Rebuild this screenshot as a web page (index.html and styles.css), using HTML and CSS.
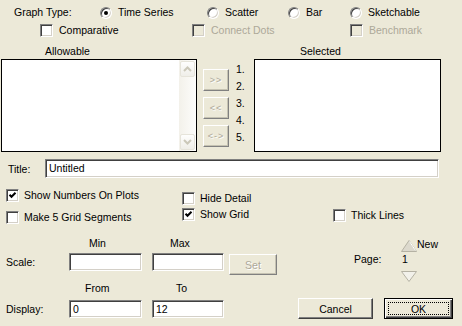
FILE: index.html
```html
<!DOCTYPE html>
<html lang="en">
<head>
  <meta charset="UTF-8" />
  <title>Graph Options</title>
  <link rel="stylesheet" href="styles.css">
</head>
<body>

  <!-- Graph type -->
  <div class="row type-row">
    <span class="type-label">Graph Type:</span>
    <label class="opt w-time"><span class="radio on"></span>Time Series</label>
    <label class="opt w-scatter"><span class="radio"></span>Scatter</label>
    <label class="opt w-bar"><span class="radio"></span>Bar</label>
    <label class="opt"><span class="radio"></span>Sketchable</label>
  </div>

  <div class="row opts-row">
    <label class="opt w-comp"><span class="box"></span>Comparative</label>
    <label class="opt off w-dots"><span class="box"></span>Connect Dots</label>
    <label class="opt off"><span class="box"></span>Benchmark</label>
  </div>

  <!-- Lists -->
  <div class="row list-heads">
    <span class="head-allow">Allowable</span>
    <span>Selected</span>
  </div>

  <div class="lists">
    <div class="listbox allow">
      <div class="list-body"></div>
      <div class="scroll">
        <div class="scroll-btn">
          <svg width="9" height="6" viewBox="0 0 9 6"><path d="M1 5 L4.5 1.5 L8 5" fill="none" stroke="#cbc8b9" stroke-width="2"/></svg>
        </div>
        <div class="scroll-btn">
          <svg width="9" height="6" viewBox="0 0 9 6"><path d="M1 1 L4.5 4.5 L8 1" fill="none" stroke="#cbc8b9" stroke-width="2"/></svg>
        </div>
      </div>
    </div>
    <div class="move-btns">
      <div class="btn off small">&gt;&gt;</div>
      <div class="btn off small">&lt;&lt;</div>
      <div class="btn off small">&lt;-&gt;</div>
    </div>
    <div class="nums">
      <div>1.</div><div>2.</div><div>3.</div><div>4.</div><div>5.</div>
    </div>
    <div class="listbox selected"></div>
  </div>

  <!-- Title -->
  <div class="title-row">
    <span class="title-label">Title:</span>
    <div class="field title-field">Untitled</div>
  </div>

  <!-- Options -->
  <div class="checks">
    <div class="check-col col-a">
      <label class="opt"><span class="box">
        <svg width="11" height="11" viewBox="0 0 11 11"><path d="M2.5 4.8 L4.5 6.8 L8.5 2.8" fill="none" stroke="#000" stroke-width="2"/></svg>
      </span>Show Numbers On Plots</label>
      <label class="opt"><span class="box"></span>Make 5 Grid Segments</label>
    </div>
    <div class="check-col col-b">
      <label class="opt"><span class="box"></span>Hide Detail</label>
      <label class="opt"><span class="box">
        <svg width="11" height="11" viewBox="0 0 11 11"><path d="M2.5 4.8 L4.5 6.8 L8.5 2.8" fill="none" stroke="#000" stroke-width="2"/></svg>
      </span>Show Grid</label>
    </div>
    <div class="check-col col-c">
      <label class="opt"><span class="box"></span>Thick Lines</label>
    </div>
  </div>

  <!-- Scale, display, page -->
  <div class="bottom">
    <div class="bottom-left">
      <div class="heads heads-scale">
        <span class="head-first">Min</span>
        <span>Max</span>
      </div>
      <div class="field-row scale-row">
        <span class="row-label">Scale:</span>
        <div class="field num-a"></div>
        <div class="field num-b"></div>
        <div class="btn off set-btn">Set</div>
      </div>
      <div class="heads heads-display">
        <span class="head-first">From</span>
        <span>To</span>
      </div>
      <div class="field-row">
        <span class="row-label">Display:</span>
        <div class="field num-a">0</div>
        <div class="field num-b">12</div>
      </div>
    </div>

    <div class="bottom-right">
      <div class="pager">
        <span class="page-label">Page:</span>
        <div class="spin">
          <svg class="spin-up" width="17" height="12" viewBox="0 0 17 12"><polygon points="9,0.5 16.5,11.5 1.5,11.5" fill="#dcd9cd" stroke="#b5b2a4"/><path d="M9.5 1.5 L15.5 10.5" stroke="#fff"/></svg>
          <div class="page-num">1</div>
          <svg class="spin-down" width="17" height="11" viewBox="0 0 17 11"><polygon points="1.5,0.5 16.5,0.5 9,10.5" fill="#f2f1ea" stroke="#b5b2a4"/></svg>
        </div>
        <span class="page-new">New</span>
      </div>
      <div class="actions">
        <div class="btn cancel-btn">Cancel</div>
        <div class="btn ok-btn">OK</div>
      </div>
    </div>
  </div>

</body>
</html>
```

FILE: styles.css
```css
* {
  box-sizing: border-box;
}

body {
  margin: 0;
  width: 462px;
  height: 326px;
  overflow: hidden;
  background: #ece9d8;
  font-family: "Liberation Sans", Arial, sans-serif;
  font-size: 10.5px;
  color: #000;
}

.row {
  display: flex;
  align-items: center;
  height: 13px;
  line-height: 13px;
}

.opt {
  display: flex;
  align-items: center;
  gap: 6px;
  white-space: nowrap;
}

.opt.off {
  color: #aca899;
}

/* radio + checkbox */
.radio {
  width: 12px;
  height: 12px;
  border-radius: 50%;
  background: #fff;
  border: 1px solid;
  border-color: #808080 #fff #fff #808080;
  box-shadow: inset 1px 1px 0 #404040, inset -1px -1px 0 #d4d0c8;
  display: flex;
  align-items: center;
  justify-content: center;
  flex: none;
}

.radio.on::after {
  content: '';
  width: 4px;
  height: 4px;
  border-radius: 50%;
  background: #000;
}

.box {
  width: 13px;
  height: 13px;
  background: #fff;
  border: 1px solid;
  border-color: #808080 #fff #fff #808080;
  box-shadow: inset 1px 1px 0 #404040, inset -1px -1px 0 #d4d0c8;
  display: flex;
  align-items: center;
  justify-content: center;
  flex: none;
}

.box svg {
  display: block;
}

.opt.off .box {
  background: #ece9d8;
}

/* top rows */
.type-row {
  margin-top: 6px;
  padding-left: 14px;
}

.type-label { width: 86px; }
.w-time { width: 107px; }
.w-scatter { width: 81px; }
.w-bar { width: 62px; }

.opts-row {
  margin-top: 5px;
  padding-left: 40px;
}

.w-comp { width: 152px; }
.w-dots { width: 158px; }

.list-heads {
  margin-top: 8px;
  padding-left: 45px;
}

.head-allow { width: 255px; }

/* lists */
.lists {
  display: flex;
  margin-top: 1px;
  height: 93px;
  padding-left: 1px;
}

.listbox {
  background: #fff;
  border: 1px solid #000;
  height: 93px;
}

.listbox.allow {
  width: 196px;
  display: flex;
}

.listbox.selected {
  width: 187px;
}

.list-body {
  flex: 1;
}

.scroll {
  width: 17px;
  display: flex;
  flex-direction: column;
  justify-content: space-between;
  padding: 1px;
  background: linear-gradient(to right, #f3f1ea, #fdfdfb);
}

.scroll-btn {
  height: 16px;
  border: 1px solid #e6e4da;
  border-radius: 2px;
  background: linear-gradient(#fefefd, #efeee8);
  display: flex;
  align-items: center;
  justify-content: center;
}

.move-btns {
  margin-left: 6px;
  padding-top: 10px;
  display: flex;
  flex-direction: column;
  gap: 6px;
}

.nums {
  margin-left: 7px;
  width: 18px;
  padding-top: 2px;
  line-height: 17px;
}

/* buttons */
.btn {
  display: flex;
  align-items: center;
  justify-content: center;
  background: #ece9d8;
  border: 1px solid;
  border-color: #fff #404040 #404040 #fff;
  box-shadow: inset -1px -1px 0 #808080;
  white-space: nowrap;
}

.btn.off {
  color: #aca899;
  text-shadow: 1px 1px 0 #fff;
  border-color: #fff #808080 #808080 #fff;
  box-shadow: inset -1px -1px 0 #c5c2b2;
}

.btn.small {
  width: 26px;
  height: 22px;
  font-size: 9px;
  letter-spacing: 1px;
}

/* fields */
.field {
  background: #fff;
  border: 1px solid;
  border-color: #808080 #fff #fff #808080;
  box-shadow: inset 1px 1px 0 #404040, inset -1px -1px 0 #d4d0c8;
  padding-left: 3px;
  line-height: 16px;
  height: 18px;
}

.title-row {
  display: flex;
  align-items: center;
  margin-top: 7px;
  padding-left: 8px;
  height: 19px;
}

.title-label { width: 37px; }

.title-field {
  width: 394px;
  height: 19px;
}

/* checkbox columns */
.checks {
  display: flex;
  height: 48px;
}

.check-col {
  display: flex;
  flex-direction: column;
}

.check-col .opt {
  height: 14px;
  gap: 5px;
}

.col-a {
  width: 182px;
  padding: 10px 0 0 6px;
  gap: 8px;
}

.col-b {
  width: 151px;
  padding-top: 13px;
  gap: 2px;
}

.col-c {
  padding-top: 30px;
}

/* bottom */
.bottom {
  display: flex;
  height: 101px;
}

.bottom-left {
  width: 280px;
  display: flex;
  flex-direction: column;
}

.heads {
  display: flex;
  height: 14px;
  line-height: 14px;
}

.heads-scale {
  margin-top: 10px;
  padding-left: 89px;
}

.heads-scale .head-first { width: 81px; }

.heads-display {
  margin-top: 6px;
  padding-left: 85px;
}

.heads-display .head-first { width: 91px; }

.field-row {
  display: flex;
  align-items: flex-start;
  height: 18px;
  margin-top: 5px;
}

.scale-row {
  height: 22px;
  margin-top: 3px;
}

.row-label {
  width: 69px;
  padding-left: 6px;
  line-height: 18px;
}

.num-a {
  width: 73px;
  margin-right: 10px;
}

.num-b { width: 72px; }

.set-btn {
  width: 48px;
  height: 21px;
  margin: 1px 0 0 5px;
}

.bottom-right {
  flex: 1;
  display: flex;
  flex-direction: column;
}

.pager {
  display: flex;
  align-items: flex-start;
  margin-top: 11px;
  height: 61px;
  padding-left: 74px;
}

.page-label {
  width: 46px;
  margin-top: 15px;
  line-height: 14px;
}

.spin {
  width: 17px;
  display: flex;
  flex-direction: column;
}

.spin svg {
  display: block;
}

.spin-up { margin-top: 3px; }

.page-num {
  line-height: 14px;
  padding-left: 2px;
}

.spin-down { margin-top: 5px; }

.page-new {
  line-height: 14px;
}

.actions {
  display: flex;
}

.cancel-btn {
  width: 75px;
  height: 21px;
  margin-left: 18px;
}

.ok-btn {
  position: relative;
  width: 69px;
  height: 21px;
  margin-left: 11px;
  border: 1px solid #000;
  box-shadow: inset 1px 1px 0 #fff, inset -1px -1px 0 #404040, inset -2px -2px 0 #808080;
}

.ok-btn::after {
  content: '';
  position: absolute;
  top: 3px;
  left: 3px;
  right: 3px;
  bottom: 3px;
  border: 1px dotted #000;
}
```
